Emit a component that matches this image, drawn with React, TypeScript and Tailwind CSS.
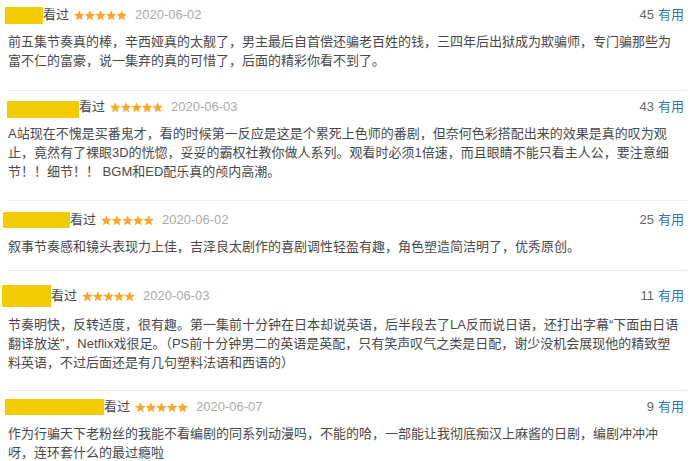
type Review = {
  mask: string
  date: string
  votes: number
  text: string
  pad: string
}

const reviews: Review[] = [
  {
    mask: 'ml-[-3px] h-[17px] w-[38px]',
    date: '2020-06-02',
    votes: 45,
    pad: 'pt-[6px] pb-[20px]',
    text: '前五集节奏真的棒，辛西娅真的太靓了，男主最后自首偿还骗老百姓的钱，三四年后出狱成为欺骗师，专门骗那些为富不仁的富豪，说一集弃的真的可惜了，后面的精彩你看不到了。',
  },
  {
    mask: 'ml-[-1px] h-[17px] w-[72px] translate-y-[2px]',
    date: '2020-06-03',
    votes: 43,
    pad: 'pt-[7px] pb-[19px]',
    text: 'A站现在不愧是买番鬼才，看的时候第一反应是这是个累死上色师的番剧，但奈何色彩搭配出来的效果是真的叹为观止，竟然有了裸眼3D的恍惚，妥妥的霸权社教你做人系列。观看时必须1倍速，而且眼睛不能只看主人公，要注意细节！！细节！！ BGM和ED配乐真的颅内高潮。',
  },
  {
    mask: 'ml-[-5px] h-[16px] w-[67px]',
    date: '2020-06-02',
    votes: 25,
    pad: 'pt-[10px] pb-[14px]',
    text: '叙事节奏感和镜头表现力上佳，吉泽良太剧作的喜剧调性轻盈有趣，角色塑造简洁明了，优秀原创。',
  },
  {
    mask: 'ml-[-6px] h-[22px] w-[49px]',
    date: '2020-06-03',
    votes: 11,
    pad: 'pt-[14px] pb-[18px]',
    text: '节奏明快，反转适度，很有趣。第一集前十分钟在日本却说英语，后半段去了LA反而说日语，还打出字幕“下面由日语翻译放送”，Netflix戏很足。（PS前十分钟男二的英语是英配，只有笑声叹气之类是日配，谢少没机会展现他的精致塑料英语，不过后面还是有几句塑料法语和西语的）',
  },
  {
    mask: 'ml-[-3px] h-[16px] w-[99px]',
    date: '2020-06-07',
    votes: 9,
    pad: 'pt-[7px] pb-[10px]',
    text: '作为行骗天下老粉丝的我能不看编剧的同系列动漫吗，不能的哈，一部能让我彻底痴汉上麻酱的日剧，编剧冲冲冲呀，连环套什么的最过瘾啦',
  },
]

function Stars() {
  const star = 'M5.3 0.3 L6.77 3.78 L10.53 4.1 L7.68 6.57 L8.53 10.25 L5.3 8.3 L2.07 10.25 L2.92 6.57 L0.07 4.1 L3.83 3.78 Z'
  return (
    <svg width="53" height="11" viewBox="0 0 53 11" className="block shrink-0">
      {[0, 1, 2, 3, 4].map((i) => (
        <path key={i} d={star} transform={`translate(${i * 10.6} 0)`} fill="#ffa52a" />
      ))}
    </svg>
  )
}

function ReviewItem({ r, last }: { r: Review; last: boolean }) {
  return (
    <div className={`${r.pad} ${last ? '' : 'border-b border-[#eaeaea]'}`}>
      <div className="flex items-center justify-between pr-[3px] leading-[18px]">
        <div className="flex items-center">
          <span className={`block shrink-0 bg-[#f1cb00] ${r.mask}`} />
          <span className="text-[#494949]">看过</span>
          <span className="ml-[5px]"><Stars /></span>
          <span className="ml-[8px] text-[#aaaaaa]">{r.date}</span>
        </div>
        <div>
          <span className="text-[#666666]">{r.votes}</span>
          <span className="ml-[4px] text-[#3377aa]">有用</span>
        </div>
      </div>
      <p className="mt-2 pr-[6px] leading-[19px] text-[#494949]">{r.text}</p>
    </div>
  )
}

export default function App() {
  return (
    <div className="min-h-[461px] bg-white px-2 text-[13px] font-['Liberation_Sans','Noto_Sans_CJK_SC',sans-serif]">
      <div className="w-[679px]">
        {reviews.map((r, i) => (
          <ReviewItem key={i} r={r} last={i === reviews.length - 1} />
        ))}
      </div>
    </div>
  )
}
